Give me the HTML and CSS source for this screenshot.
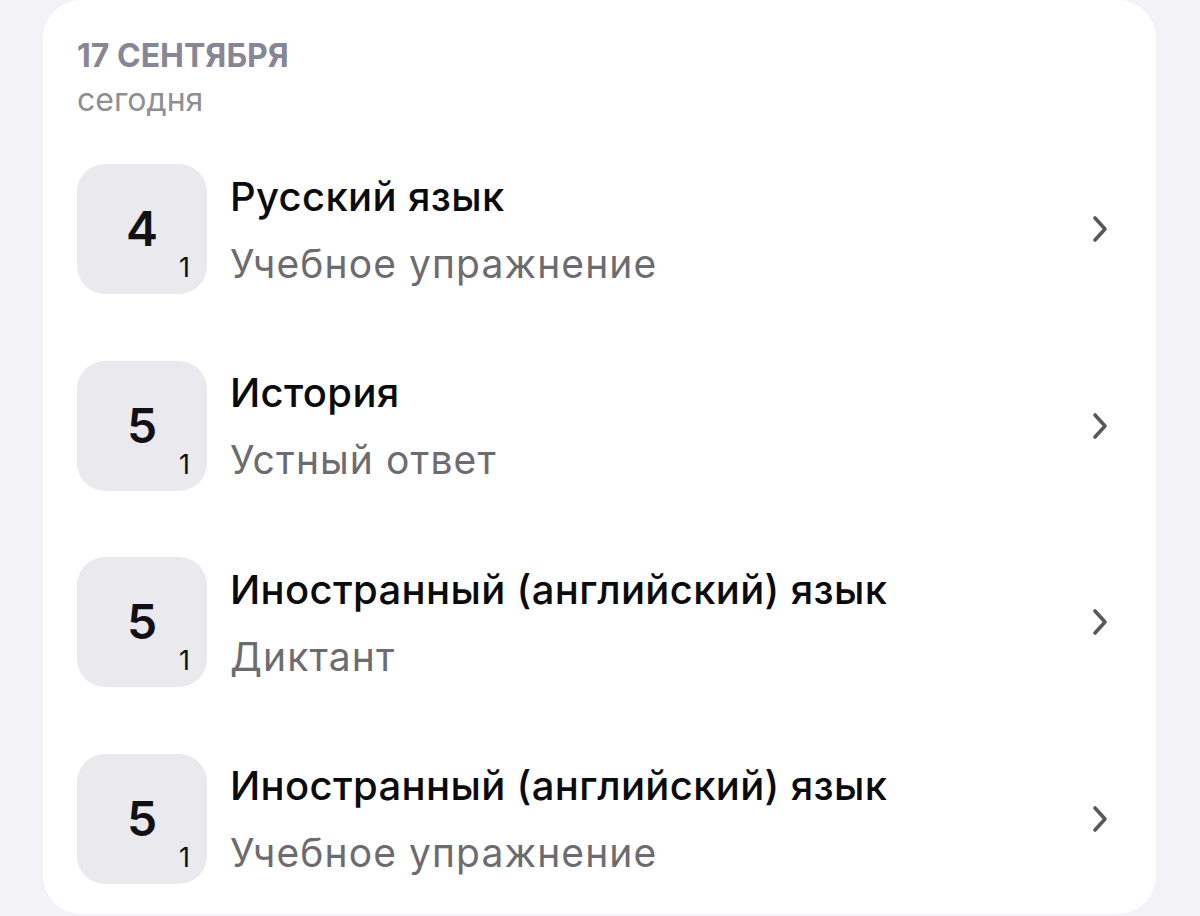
FILE: index.html
```html
<!DOCTYPE html>
<html lang="ru">
<head>
<meta charset="utf-8">
<link rel="stylesheet" href="styles.css">
</head>
<body>
<section class="card">
  <header class="day">
    <div class="day-date">17 СЕНТЯБРЯ</div>
    <div class="day-rel">сегодня</div>
  </header>
  <ul class="marks">
    <li class="mark">
      <div class="grade"><span class="grade-value">4</span><span class="grade-weight">1</span></div>
      <div class="info">
        <div class="subject">Русский язык</div>
        <div class="work">Учебное упражнение</div>
      </div>
      <svg class="chev" viewBox="0 0 16 28" width="16" height="28"><path d="M3 3 L13 14 L3 25" fill="none" stroke="#58585c" stroke-width="3.6" stroke-linecap="round" stroke-linejoin="round"/></svg>
    </li>
    <li class="mark">
      <div class="grade"><span class="grade-value">5</span><span class="grade-weight">1</span></div>
      <div class="info">
        <div class="subject">История</div>
        <div class="work">Устный ответ</div>
      </div>
      <svg class="chev" viewBox="0 0 16 28" width="16" height="28"><path d="M3 3 L13 14 L3 25" fill="none" stroke="#58585c" stroke-width="3.6" stroke-linecap="round" stroke-linejoin="round"/></svg>
    </li>
    <li class="mark">
      <div class="grade"><span class="grade-value">5</span><span class="grade-weight">1</span></div>
      <div class="info">
        <div class="subject">Иностранный (английский) язык</div>
        <div class="work">Диктант</div>
      </div>
      <svg class="chev" viewBox="0 0 16 28" width="16" height="28"><path d="M3 3 L13 14 L3 25" fill="none" stroke="#58585c" stroke-width="3.6" stroke-linecap="round" stroke-linejoin="round"/></svg>
    </li>
    <li class="mark">
      <div class="grade"><span class="grade-value">5</span><span class="grade-weight">1</span></div>
      <div class="info">
        <div class="subject">Иностранный (английский) язык</div>
        <div class="work">Учебное упражнение</div>
      </div>
      <svg class="chev" viewBox="0 0 16 28" width="16" height="28"><path d="M3 3 L13 14 L3 25" fill="none" stroke="#58585c" stroke-width="3.6" stroke-linecap="round" stroke-linejoin="round"/></svg>
    </li>
  </ul>
</section>
</body>
</html>
```
FILE: styles.css
```css
* { box-sizing: border-box; }
html, body { margin: 0; padding: 0; }
body {
  background: #f2f2f7;
  font-family: Inter, "Noto Sans", "DejaVu Sans", sans-serif;
  width: 1200px;
  height: 916px;
  overflow: hidden;
}
.card {
  margin: 0 44px 0 43px;
  height: 914px;
  background: #ffffff;
  border-radius: 38px;
  padding: 37px 48px 0 34px;
}
.day-date {
  font-size: 32px;
  line-height: 38px;
  font-weight: 700;
  color: #868696;
}
.day-rel {
  font-size: 32px;
  line-height: 38px;
  color: #8e8e93;
  margin-top: 6px;
}
.marks {
  list-style: none;
  margin: 45px 0 0;
  padding: 0;
  display: flex;
  flex-direction: column;
  gap: 66.6px;
}
.mark {
  display: flex;
  align-items: center;
  height: 130px;
}
.grade {
  position: relative;
  flex: 0 0 130px;
  width: 130px;
  height: 130px;
  border-radius: 28px;
  background: #e9e9ee;
  display: flex;
  align-items: center;
  justify-content: center;
}
.grade-value {
  font-size: 48px;
  font-weight: 600;
  color: #111114;
  line-height: 1;
}
.grade-weight {
  position: absolute;
  right: 17px;
  bottom: 13px;
  font-size: 27px;
  line-height: 1;
  color: #111114;
}
.info {
  flex: 1;
  margin-left: 23px;
  margin-top: 1px;
  display: flex;
  flex-direction: column;
}
.subject {
  font-size: 40px;
  line-height: 48px;
  font-weight: 500;
  letter-spacing: 0.35px;
  color: #0b0b0d;
}
.work {
  font-size: 39px;
  line-height: 46px;
  letter-spacing: 1.1px;
  margin-top: 20px;
  color: #6c6c70;
}
.chev {
  flex: 0 0 16px;
}
```
